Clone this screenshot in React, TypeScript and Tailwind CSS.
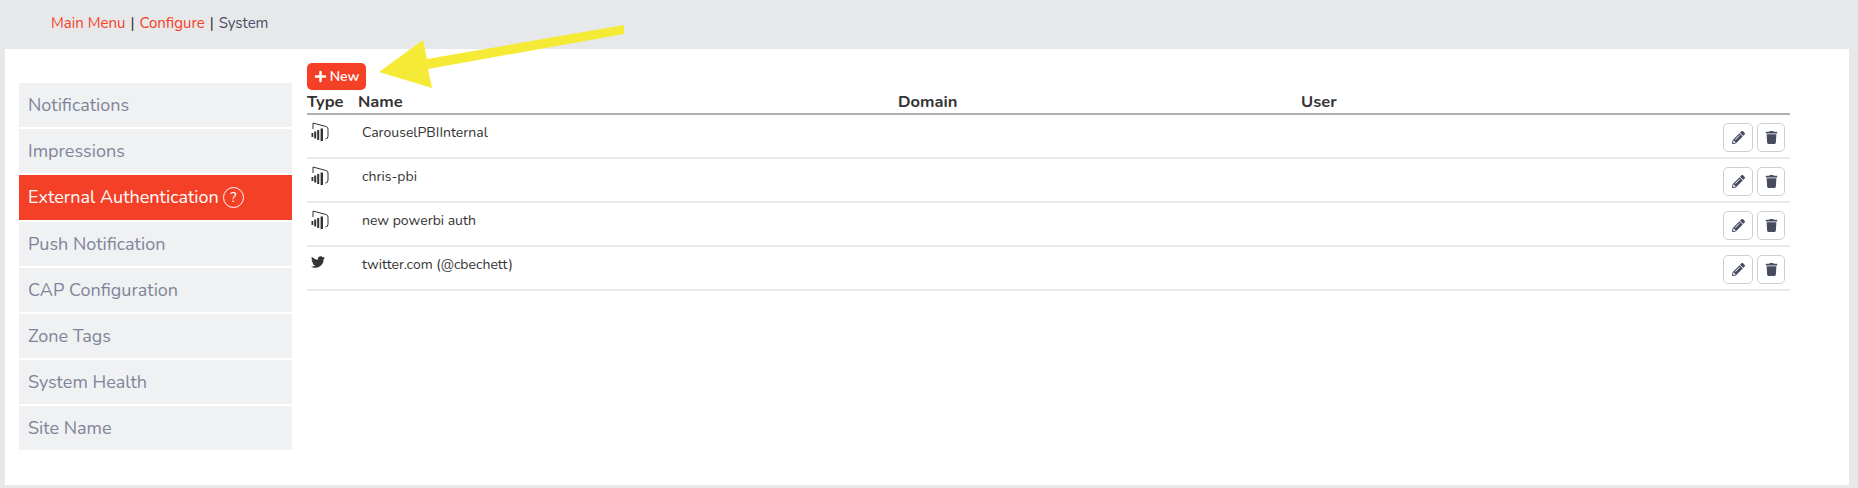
import { FaPencilAlt, FaTrash, FaTwitter, FaPlus } from 'react-icons/fa'

const menu = ['Notifications', 'Impressions', 'External Authentication', 'Push Notification', 'CAP Configuration', 'Zone Tags', 'System Health', 'Site Name']

const rows = [
  { name: 'CarouselPBIInternal', icon: 'pbi' },
  { name: 'chris-pbi', icon: 'pbi' },
  { name: 'new powerbi auth', icon: 'pbi' },
  { name: 'twitter.com (@cbechett)', icon: 'twitter' },
]

function PowerBi() {
  return (
    <svg width="18" height="20" viewBox="0 0 18 20" fill="none" className="text-[#333]">
      <path d="M2 7V1L15 4.5Q17 5 17 7V14Q17 17 14.5 17" stroke="currentColor" strokeWidth="1" />
      <rect x="0.5" y="11" width="1.8" height="4" fill="currentColor" />
      <rect x="3.2" y="9.5" width="2" height="7" fill="currentColor" />
      <rect x="6.2" y="8" width="2" height="10" fill="currentColor" />
      <rect x="9.6" y="6.5" width="2.4" height="12.5" fill="currentColor" />
    </svg>
  )
}

function ArrowMark() {
  return (
    <svg width="260" height="70" viewBox="0 0 260 70" className="absolute left-[370px] top-[22px]">
      <path d="M254 3L254 12L58 47L62 66L9 50L53 18L57 37Z" fill="#f5ea35" />
    </svg>
  )
}

export default function App() {
  return (
    <div className="relative h-[488px] w-[1858px] overflow-hidden bg-[#e7e8ea] font-['Nunito','Lato',sans-serif] text-[#333]">
      <div className="flex h-[49px] items-center pb-[3px] pl-[51px] text-[15px] text-[#333]">
        <a className="text-[#f44027]">Main Menu</a>
        <span className="px-[5px]">|</span>
        <a className="text-[#f44027]">Configure</a>
        <span className="px-[5px]">|</span>
        <span className="text-[#4b5064]">System</span>
      </div>

      <div className="ml-[5px] flex h-[436px] w-[1844px] bg-white">
        <div className="ml-[14px] mt-[34px] flex w-[273px] flex-col gap-[2px]">
          {menu.map(item => {
            const active = item === 'External Authentication'
            return (
              <div
                key={item}
                className={
                  active
                    ? 'flex h-[45px] items-center gap-[4px] bg-[#f44027] pl-[9px] text-[18px] text-white'
                    : 'flex h-[44px] items-center bg-[#f0f1f3] pl-[9px] text-[18px] text-[#7f8599]'
                }
              >
                {item}
                {active && (
                  <span className="flex h-[21px] w-[21px] items-center justify-center rounded-full border border-white text-[14px] leading-none">
                    ?
                  </span>
                )}
              </div>
            )
          })}
        </div>

        <div className="ml-[15px] mt-[14px] w-[1483px]">
          <button className="flex h-[27px] w-[59px] items-center justify-center gap-[3px] rounded-[5px] bg-[#f44027] text-[14px] font-semibold text-white">
            <FaPlus className="h-[13px] w-[13px]" />
            New
          </button>
          <div className="grid h-[25px] grid-cols-[51px_540px_403px_1fr] items-center border-b-2 border-[#b0b0b0] pt-[2px] text-[16.5px] font-bold leading-none text-[#333]">
            <div>Type</div>
            <div>Name</div>
            <div>Domain</div>
            <div>User</div>
          </div>
          {rows.map(row => (
            <div
              key={row.name}
              className="grid h-[44px] grid-cols-[55px_1fr_auto] border-b-2 border-[#e9e9e9] pr-[5px] text-[14px] text-[#333]"
            >
              <div className="pl-[4px] pt-[7px]">
                {row.icon === 'twitter' ? <FaTwitter className="mt-[1px] h-[14px] w-[14px]" /> : <PowerBi />}
              </div>
              <div className="pt-[8px] leading-[20px]">{row.name}</div>
              <div className="flex gap-[4px] pt-[8px]">
                <button className="flex h-[29px] w-[30px] items-center justify-center rounded-[5px] border border-[#cfcfcf] text-[#474c60]">
                  <FaPencilAlt className="h-[13px] w-[13px]" />
                </button>
                <button className="flex h-[29px] w-[28px] items-center justify-center rounded-[5px] border border-[#cfcfcf] text-[#474c60]">
                  <FaTrash className="h-[13px] w-[13px]" />
                </button>
              </div>
            </div>
          ))}
        </div>
      </div>

      <ArrowMark />
    </div>
  )
}
